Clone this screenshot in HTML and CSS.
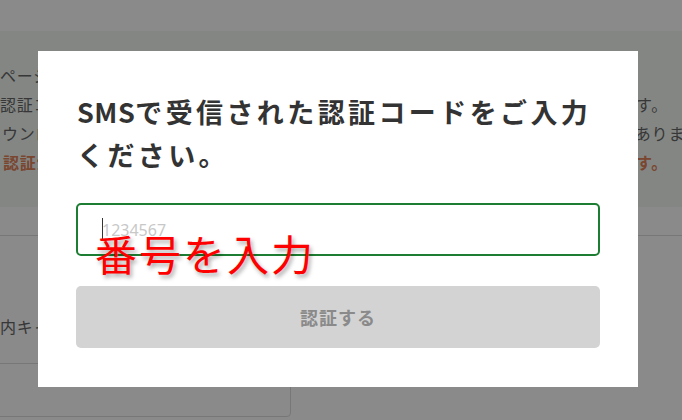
FILE: index.html
```html
<!DOCTYPE html>
<html lang="ja">
<head>
    <meta charset="UTF-8">
    <meta name="viewport" content="width=device-width, initial-scale=1.0">
    <title>SMS認証</title>
    <link rel="stylesheet" href="styles.css">
</head>
<body>
    <div class="page">
        <div class="topbar"></div>
        <div class="notice">
            <p class="notice-line"><span>ページを閉じずに</span><span></span></p>
            <p class="notice-line"><span>認証コード</span><span>再送信できます。</span></p>
            <p class="notice-line overflow"><span>ウンロード</span><span>必要があります</span></p>
            <p class="notice-line strong"><span>認証が完了</span><span>願います。</span></p>
        </div>
        <div class="section">
            <p class="section-text">内キャンセル待ちの登録について</p>
        </div>
        <div class="card"></div>
    </div>

    <div class="overlay">
        <div class="modal">
            <h2 class="modal-title"><span class="latin">SMS</span>で受信された認証コードをご入力ください。</h2>
            <div class="field">
                <input type="text" class="code-input" placeholder="1234567">
                <span class="caret"></span>
                <span class="note">番号を入力</span>
            </div>
            <button class="submit" disabled>認証する</button>
        </div>
    </div>
</body>
</html>
```

FILE: styles.css
```css
/* Base */
* {
    box-sizing: border-box;
}

body {
    margin: 0;
    padding: 0;
    width: 682px;
    height: 420px;
    overflow: hidden;
    font-family: 'Noto Sans CJK JP', 'Noto Sans', sans-serif;
    background: #fff;
    color: #666;
}

/* Page behind the dialog */
.page {
    width: 682px;
}

.topbar {
    height: 31px;
}

.notice {
    background: #f3f8f3;
    padding: 30px 14px 30px 0;
}

.notice-line {
    margin: 0;
    height: 29px;
    line-height: 29px;
    font-size: 16px;
    letter-spacing: 0.8px;
    white-space: nowrap;
    display: flex;
    justify-content: space-between;
}

.notice-line.overflow {
    padding-left: 2px;
    margin-right: -34px;
}

.notice-line.strong {
    color: #e2815a;
    font-weight: bold;
    padding-left: 3px;
}

.section {
    margin-top: 28px;
    border-top: 1px solid #ddd;
    height: 128px;
    padding-top: 76px;
}

.section-text {
    margin: 0;
    line-height: 29px;
    font-size: 16px;
    letter-spacing: 0.8px;
}

.card {
    width: 301px;
    height: 54px;
    margin-left: -10px;
    border: 1px solid #ddd;
    border-radius: 0 0 4px 0;
}

/* Dialog */
.overlay {
    position: fixed;
    inset: 0;
    background: rgba(0, 0, 0, 0.46);
    display: flex;
    justify-content: flex-start;
    align-items: flex-start;
    padding: 51px 0 0 38px;
}

.modal {
    width: 600px;
    background: #fff;
    padding: 39px 38px;
}

.modal-title {
    margin: 0 0 27px;
    font-size: 27px;
    line-height: 43px;
    letter-spacing: 3.4px;
    font-weight: bold;
    color: #333;
    padding-left: 1px;
}

.modal-title .latin {
    letter-spacing: 0.5px;
}

.field {
    position: relative;
    margin-bottom: 30px;
}

.code-input {
    display: block;
    width: 100%;
    height: 53px;
    border: 2px solid #1d7d32;
    border-radius: 5px;
    padding: 0 24px;
    font-family: 'Noto Sans', sans-serif;
    font-size: 16px;
    outline: none;
}

.code-input::placeholder {
    color: #c8c8c8;
}

.caret {
    position: absolute;
    left: 26px;
    top: 15px;
    width: 1px;
    height: 21px;
    background: #333;
}

.note {
    position: absolute;
    left: 19px;
    top: 25px;
    font-size: 42px;
    line-height: 50px;
    letter-spacing: 2px;
    color: #ff0000;
    white-space: nowrap;
    text-shadow: 2px 3px 4px rgba(0, 0, 0, 0.35);
}

.submit {
    display: block;
    width: 100%;
    height: 62px;
    border: none;
    border-radius: 5px;
    background: #d3d3d3;
    color: #8a8a8a;
    font-family: 'Noto Sans CJK JP', sans-serif;
    font-size: 18px;
    font-weight: bold;
    letter-spacing: 1px;
}
```
